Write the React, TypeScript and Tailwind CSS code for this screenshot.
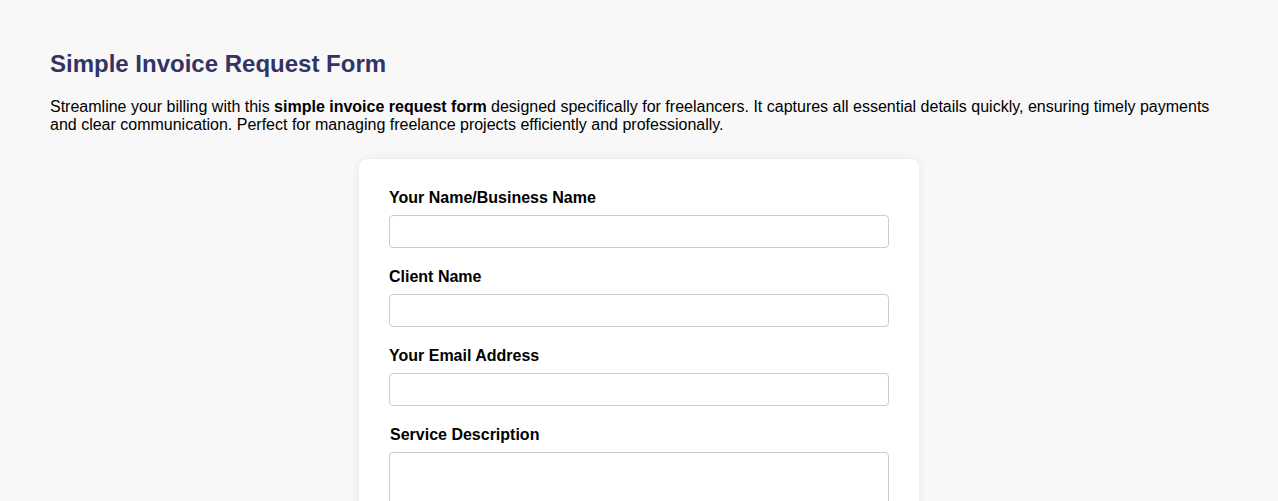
import React from 'react'

const fields = [
  { label: 'Your Name/Business Name', type: 'text' },
  { label: 'Client Name', type: 'text' },
  { label: 'Your Email Address', type: 'email' },
]

const App = () => (
  <div className="min-h-screen bg-[#f8f8f8] px-[50px] pt-[50px] pb-10 font-['Liberation_Sans',Arial,sans-serif] text-black">
    <h1 className="text-[24px] font-bold leading-[28px] text-[#333366]">Simple Invoice Request Form</h1>
    <p className="mt-[20px] text-[16px] leading-[18px]">
      Streamline your billing with this <strong>simple invoice request form</strong> designed specifically for
      freelancers. It captures all essential details quickly, ensuring timely payments and clear communication.
      Perfect for managing freelance projects efficiently and professionally.
    </p>

    <form className="mx-auto mt-[25px] w-[560px] rounded-lg bg-white p-[30px] shadow-[0_0_10px_rgba(0,0,0,0.08)]">
      {fields.map((f) => (
        <div key={f.label}>
          <label className="mb-2 block text-[16px] font-bold leading-[18px]">{f.label}</label>
          <input
            type={f.type}
            className="mb-5 block h-[33px] w-full rounded border border-[#cccccc] px-2 text-[13px]"
          />
        </div>
      ))}
      <div className="pl-px">
        <label className="mb-2 block text-[16px] font-bold leading-[18px]">Service Description</label>
      </div>
      <textarea className="mb-5 block h-[100px] w-full rounded border border-[#cccccc] p-2 text-[13px]" />
    </form>
  </div>
)

export default App
